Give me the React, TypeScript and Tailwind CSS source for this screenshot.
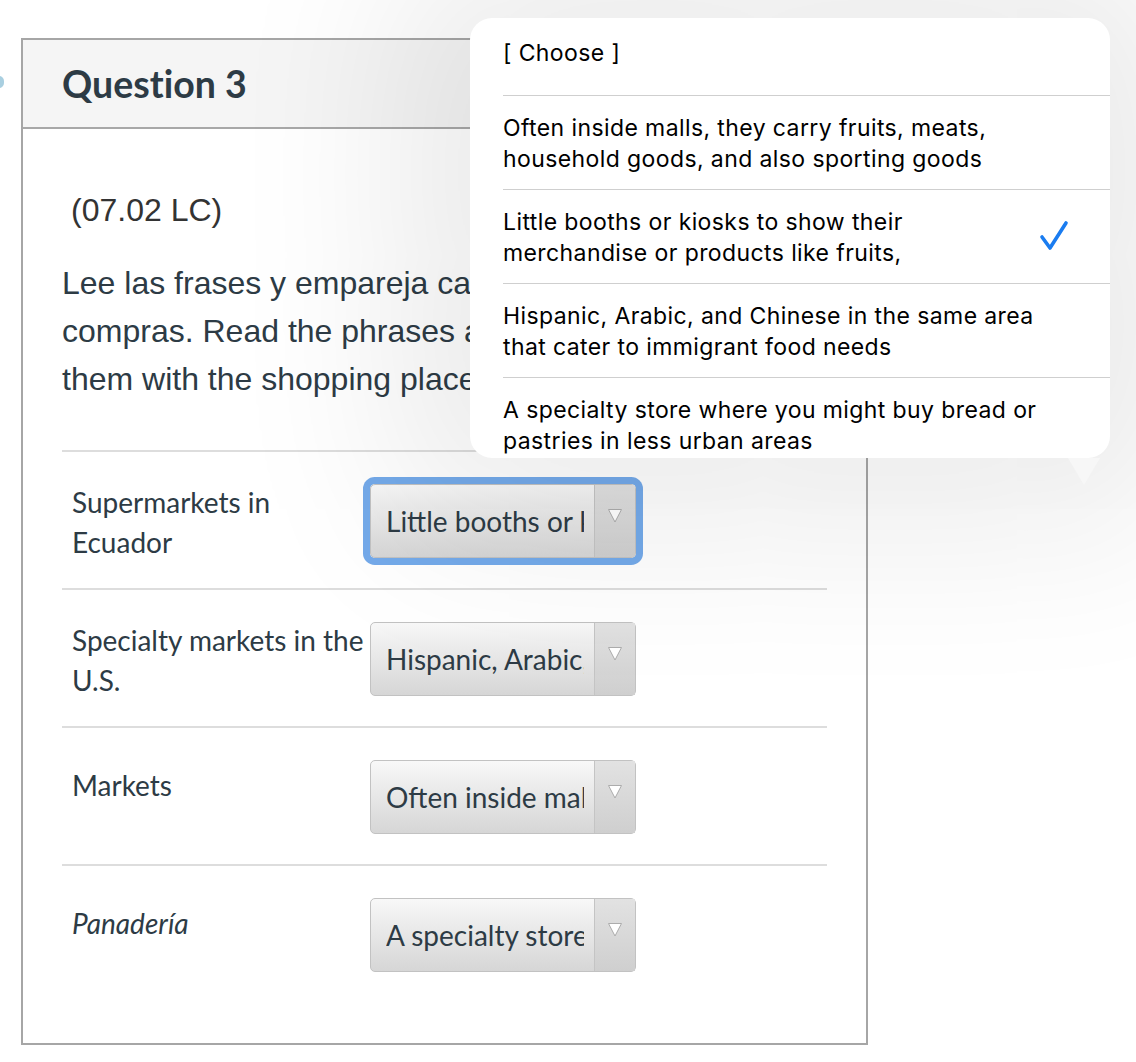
import React from 'react';

interface MatchRow {
  label: string;
  value: string;
  italic?: boolean;
  focused?: boolean;
  oneLine?: boolean;
}

const rows: MatchRow[] = [
  { label: 'Supermarkets in Ecuador', value: 'Little booths or kiosks to show their merchandise', focused: true },
  { label: 'Specialty markets in the U.S.', value: 'Hispanic, Arabic, and Chinese in the same area' },
  { label: 'Markets', value: 'Often inside malls, they carry fruits', oneLine: true },
  { label: 'Panadería', value: 'A specialty store where you might buy bread', italic: true, oneLine: true },
];

// each option as its two visible lines
const options: [string, string][] = [
  ['Often inside malls, they carry fruits, meats,', 'household goods, and also sporting goods'],
  ['Little booths or kiosks to show their', 'merchandise or products like fruits,'],
  ['Hispanic, Arabic, and Chinese in the same area', 'that cater to immigrant food needs'],
  ['A specialty store where you might buy bread or', 'pastries in less urban areas'],
];

const SelectBox: React.FC<{ value: string; focused?: boolean }> = ({ value, focused }) => (
  <div className={`w-[266px] h-[74px] shrink-0 flex rounded-[5px] border border-[#c2c2c2] bg-gradient-to-b from-[#f8f8f8] to-[#d6d6d6] ${focused ? 'shadow-[0_0_0_7px_#74aaea]' : ''}`}>
    <div className="flex-1 min-w-0 flex items-center pl-[15px] pr-[10px]">
      <span className="block overflow-hidden whitespace-nowrap text-[28px] text-[#2d3b45]">{value}</span>
    </div>
    <div className="w-[41px] border-l border-[#c4c4c4] bg-gradient-to-b from-[#e2e2e2] to-[#cfcfcf] flex justify-center pt-[23px]">
      <svg width="16" height="15" viewBox="0 0 16 15">
        <polygon points="1.5,1.5 14.5,1.5 8,14" fill="#ffffff" stroke="#acacac" strokeWidth="1" strokeLinejoin="round" />
      </svg>
    </div>
  </div>
);

export default function App() {
  return (
    <div className="relative w-[1136px] h-[1062px] overflow-hidden bg-white font-['Lato',sans-serif]">
      <div className="absolute left-[-6px] top-[76px] w-[10px] h-[12px] rounded-full bg-[#a9cfe0]" />

      <div className="ml-[21px] mt-[38px] w-[847px] h-[1007px] border-2 border-[#a6a6a6] flex flex-col">
        <div className="h-[89px] bg-[#f5f5f5] border-b-2 border-[#a8a8a8] flex items-center px-[39px]">
          <h1 className="text-[37.5px] font-bold text-[#2d3b45] leading-none [font-variant-ligatures:none]">Question 3</h1>
        </div>
        <div className="px-[39px] font-['Liberation_Sans',Arial,sans-serif] text-[#2d3b45]">
          <p className="mt-[57px] pl-[9px] text-[32px] leading-[48px] text-[#333]">(07.02 LC)</p>
          <p className="mt-[25px] text-[32px] leading-[48px]">
            Lee las frases y empareja cada una con el lugar de
            <br />
            compras. Read the phrases and match
            <br />
            them with the shopping places.
          </p>
          <div className="mt-[47px] font-['Lato',sans-serif]">
            {rows.map((r) => (
              <div key={r.label} className="h-[138px] border-t-2 border-[#dddddd] pt-[32px] flex items-start">
                <div className={`w-[308px] pl-[10px] pr-[4px] text-[28px] leading-[40px] text-[#2d3b45] ${r.oneLine ? 'mt-[5px]' : '-mt-[2px]'} ${r.italic ? 'italic' : ''}`}>
                  {r.label}
                </div>
                <SelectBox value={r.value} focused={r.focused} />
              </div>
            ))}
          </div>
        </div>
      </div>

      <div className="absolute left-[470px] top-[18px] w-[640px] h-[440px] rounded-[22px] bg-white overflow-hidden shadow-[0_0_180px_70px_rgba(0,0,0,0.085)] font-['Inter',sans-serif] text-[23px] tracking-[0.4px] leading-[31px] text-black">
        <div className="ml-[33px] h-[78px] border-b border-[#cfcfcf] pt-[20px]">[ Choose ]</div>
        {options.map((o, i) => (
          <div key={o[0]} className="ml-[33px] h-[94px] border-b border-[#cfcfcf] pt-[17px] flex justify-between items-start pr-[40px]">
            <span className="whitespace-nowrap">
              {o[0]}
              <br />
              {o[1]}
            </span>
            {i === 1 && (
              <svg width="32" height="34" viewBox="0 0 32 34" className="mt-[12px]">
                <path d="M4 18 L12 29 L28 4" fill="none" stroke="#1a7cf0" strokeWidth="3.6" strokeLinecap="round" strokeLinejoin="round" />
              </svg>
            )}
          </div>
        ))}
      </div>
      <svg className="absolute left-[1068px] top-[458px]" width="32" height="28" viewBox="0 0 32 28">
        <polygon points="0,0 32,0 16,27" fill="#f7f7f7" />
      </svg>
    </div>
  );
}
